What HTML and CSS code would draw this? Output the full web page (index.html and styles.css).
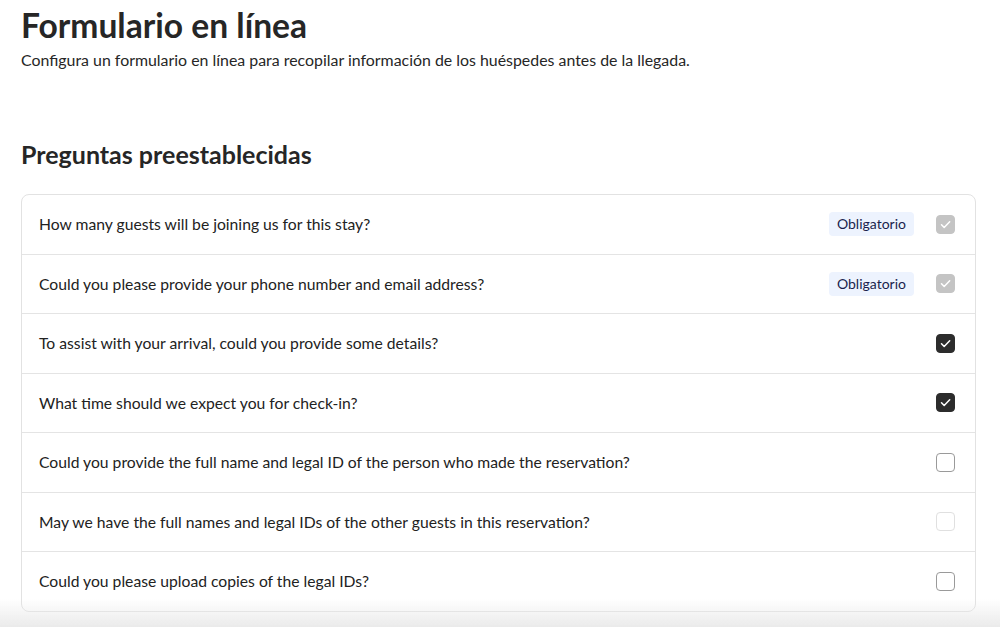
FILE: index.html
```html
<!DOCTYPE html>
<html lang="es">
<head>
<meta charset="utf-8">
<link rel="stylesheet" href="styles.css">
</head>
<body>
<main class="page">
  <header class="head">
    <h1 class="title">Formulario en línea</h1>
    <p class="subtitle">Configura un formulario en línea para recopilar información de los huéspedes antes de la llegada.</p>
  </header>
  <section class="section">
    <h2 class="section-title">Preguntas preestablecidas</h2>
    <div class="card">
      <div class="row">
        <span class="q">How many guests will be joining us for this stay?</span>
        <span class="badge">Obligatorio</span>
        <span class="cb cb-disabled"><svg viewBox="0 0 20 20"><path d="M5.8 10.3l2.8 2.8L14.4 7.2"/></svg></span>
      </div>
      <div class="row">
        <span class="q">Could you please provide your phone number and email address?</span>
        <span class="badge">Obligatorio</span>
        <span class="cb cb-disabled"><svg viewBox="0 0 20 20"><path d="M5.8 10.3l2.8 2.8L14.4 7.2"/></svg></span>
      </div>
      <div class="row">
        <span class="q">To assist with your arrival, could you provide some details?</span>
        <span class="cb cb-checked"><svg viewBox="0 0 20 20"><path d="M5.8 10.3l2.8 2.8L14.4 7.2"/></svg></span>
      </div>
      <div class="row">
        <span class="q">What time should we expect you for check-in?</span>
        <span class="cb cb-checked"><svg viewBox="0 0 20 20"><path d="M5.8 10.3l2.8 2.8L14.4 7.2"/></svg></span>
      </div>
      <div class="row">
        <span class="q">Could you provide the full name and legal ID of the person who made the reservation?</span>
        <span class="cb"></span>
      </div>
      <div class="row">
        <span class="q">May we have the full names and legal IDs of the other guests in this reservation?</span>
        <span class="cb cb-faint"></span>
      </div>
      <div class="row">
        <span class="q">Could you please upload copies of the legal IDs?</span>
        <span class="cb"></span>
      </div>
    </div>
  </section>
</main>
<div class="fade"></div>
</body>
</html>
```

FILE: styles.css
```css
html, body {
  margin: 0;
  padding: 0;
  background: #ffffff;
}
body {
  font-family: "Lato", "Liberation Sans", sans-serif;
  color: #222222;
}
.page {
  padding: 5px 24px 0 21px;
}
.title {
  margin: 0;
  font-size: 33.6px;
  line-height: 40px;
  font-weight: 700;
  color: #262626;
}
.subtitle {
  margin: 3px 0 0;
  font-size: 15.9px;
  line-height: 24px;
  color: #262626;
}
.section {
  margin-top: 67px;
}
.section-title {
  margin: 0 0 25px;
  font-size: 25px;
  line-height: 30px;
  font-weight: 700;
  color: #262626;
}
.card {
  border: 1px solid #e2e2e2;
  border-radius: 8px;
  background: #fff;
}
.row {
  display: flex;
  align-items: center;
  height: 58.5px;
  padding: 0 20px 0 17px;
  border-top: 1px solid #e4e4e4;
}
.row:first-child {
  border-top: none;
}
.q {
  flex: 1;
  font-size: 15.7px;
  color: #222;
}
.badge {
  background: #edf3fe;
  color: #1a1f4d;
  font-size: 14px;
  line-height: 24px;
  padding: 0 8px;
  border-radius: 4px;
  margin-right: 21px;
}
.cb {
  width: 19px;
  height: 19px;
  margin-left: 1px;
  box-sizing: border-box;
  border: 1.5px solid #9a9a9a;
  border-radius: 4px;
  display: flex;
  align-items: center;
  justify-content: center;
}
.cb svg {
  width: 19px;
  height: 19px;
  flex: none;
  fill: none;
  stroke: #fff;
  stroke-width: 1.6;
  stroke-linecap: round;
  stroke-linejoin: round;
}
.cb-disabled {
  background: #c4c4c4;
  border-color: #c4c4c4;
}
.cb-checked {
  background: #2c2c2c;
  border-color: #2c2c2c;
}
.cb-faint {
  border-color: #e0e0e0;
}
.fade {
  position: fixed;
  left: 0;
  right: 0;
  bottom: 0;
  height: 28px;
  background: linear-gradient(to bottom, rgba(238,238,238,0), rgba(232,232,232,0.9));
  pointer-events: none;
}
```
